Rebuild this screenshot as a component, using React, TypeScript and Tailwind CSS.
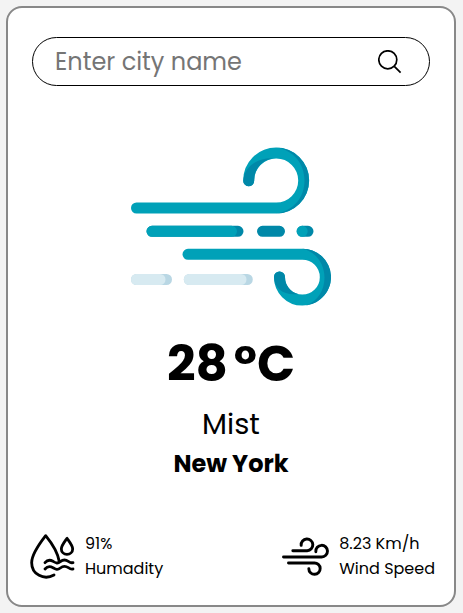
import React from "react";

function SearchIcon() {
  return (
    <svg viewBox="0 0 24 24" className="size-6" fill="none" stroke="black" strokeWidth="1.7" aria-hidden="true">
      <circle cx="9.8" cy="9.8" r="9" />
      <path d="M16.3 16.3 22.6 22.6" />
    </svg>
  );
}

function MistIcon() {
  return (
    <svg viewBox="131 147 200 160" className="h-40 w-[200px]" fill="none" strokeLinecap="round" role="img" aria-label="Mist">
      <g stroke="#00a1b8" strokeWidth="11">
        <path d="M136.5 208H276A27.5 27.5 0 1 0 248.7 180.7" />
        <path d="M188 254.300H302.300A22.900 22.900 0 1 1 279.500 277" />
      </g>
      <g fill="#0088a8">
        <path d="M276 147.500A33 33 0 0 1 276 213.500C294 211 304.500 197 304.500 180.500S294 150 276 147.500Z" />
        <path d="M243.200 181C244 168 256 157.500 273 158.200A22 22 0 0 0 254.200 180.700A5.500 5.500 0 0 1 243.200 181Z" />
        <path d="M302.300 248.800A28.400 28.400 0 0 1 306 305.400C318 301 324.500 290 324.500 277.500C324.500 264 316 251.500 302.300 248.800Z" />
        <path d="M274 277A5.500 5.500 0 0 1 285 277A17.400 17.400 0 0 0 298 294C285 296 274 289 274 277Z" />
      </g>
      <g strokeWidth="11">
        <path stroke="#0088a8" d="M152 231.300H238M262.500 231.300H279.500M302.300 231.300H308" />
        <path stroke="#00a1b8" d="M152 231.300H231.500M302 231.300H302.200" />
        <path stroke="#b9d7e4" d="M136.500 279.500H166.500M189.300 279.500H247.300" />
        <path stroke="#d7eaf1" d="M136.500 279.500H160M189.300 279.500H241" />
      </g>
    </svg>
  );
}

function HumidityIcon() {
  return (
    <svg viewBox="15 15 135 135" className="size-[45px]" fill="none" stroke="black" strokeWidth="8.500" strokeLinecap="round" strokeLinejoin="round" aria-hidden="true">
      <path d="M87 138C57 155 20 136 20 101C20 77 48 38 62 20C76 37 98 70 103 98" />
      <path d="M126 28C119 38 109 50 109 60A17 16 0 0 0 143 60C143 50 133 38 126 28Z" />
      <path d="M60 101C66 94 75 92 84 97S97 105 106 98S121 91 130 97S139 101 144 101" />
      <path d="M60 120C66 113 75 111 84 116S97 124 106 117S121 110 130 116S139 120 144 120" />
    </svg>
  );
}

function WindIcon() {
  return (
    <svg viewBox="12.500 24 141 117" className="h-[39px] w-[47px]" fill="none" stroke="black" strokeWidth="8.800" strokeLinecap="round" aria-hidden="true">
      <path d="M45 65H88A17.500 17.500 0 1 0 70 49" />
      <path d="M17 84H131A17.500 17.500 0 1 0 114 68" />
      <path d="M32 102H109A17 17 0 1 1 93 119" />
    </svg>
  );
}

function Stat({ icon, value, label }: { icon: React.ReactNode; value: string; label: string }) {
  return (
    <div className="flex items-center gap-2.5">
      {icon}
      <dl className="flex flex-col-reverse text-base leading-[25px]">
        <dt>{label}</dt>
        <dd>{value}</dd>
      </dl>
    </div>
  );
}

export default function App() {
  return (
    <main className="flex min-h-screen flex-col bg-[#f3f3f3] p-1.5 font-['Poppins','Inter',sans-serif] text-black">
      <section className="flex w-full max-w-[450px] flex-1 flex-col rounded-2xl border-2 border-[#888888] bg-white px-6 pt-[29px] pb-6">
        <form className="flex h-[49px] items-center rounded-full border border-black pr-[27px] pl-[22px]" onSubmit={(e) => e.preventDefault()}>
          <input
            type="text"
            aria-label="City name"
            placeholder="Enter city name"
            className="min-w-0 flex-1 bg-transparent text-2xl outline-none placeholder:text-[#757575]"
          />
          <button type="submit" aria-label="Search">
            <SearchIcon />
          </button>
        </form>

        <div className="mt-[61px] flex flex-col items-center">
          <MistIcon />
          <h1 className="mt-[23px] flex gap-1.5 text-[50px] leading-[68px] font-bold">
            <span>28</span>
            <span>°C</span>
          </h1>
          <p className="mt-1.5 text-[29px] leading-10">Mist</p>
          <h2 className="text-2xl leading-10 font-bold">New York</h2>
        </div>

        <footer className="-mr-[5px] -ml-0.5 mt-auto flex items-center justify-between">
          <Stat icon={<HumidityIcon />} value="91%" label="Humadity" />
          <Stat icon={<WindIcon />} value="8.23 Km/h" label="Wind Speed" />
        </footer>
      </section>
    </main>
  );
}
